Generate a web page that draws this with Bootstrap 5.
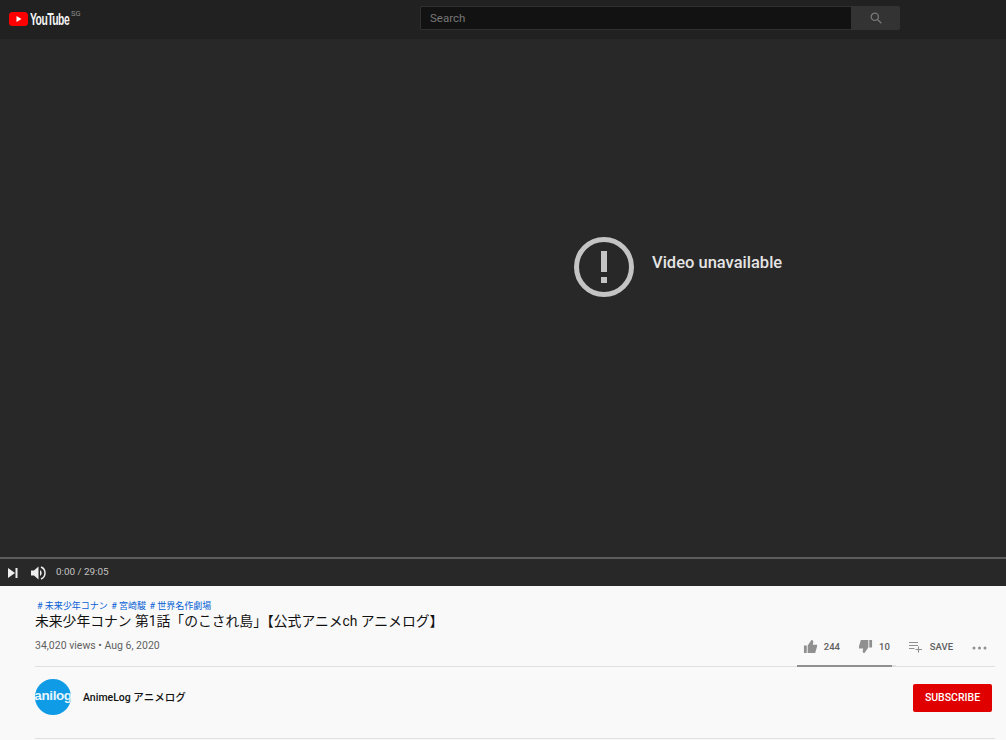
<!DOCTYPE html>
<html lang="en">
<head>
  <meta charset="UTF-8">
  <title>未来少年コナン 第1話 - YouTube</title>
  <link href="https://cdn.jsdelivr.net/npm/bootstrap@5.3.0/dist/css/bootstrap.min.css" rel="stylesheet">
  <style>
    body { font-family: Roboto, "Noto Sans CJK JP", sans-serif; background: #f9f9f9; width: 1006px; height: 740px; overflow: hidden; }
    .top-bar { height: 39px; background: #212121; padding-left: 9px; }
    .logo-box { width: 411px; margin-top: -2px; }
    .yt-word { display: inline-block; width: 39px; font-family: "Liberation Sans", sans-serif; font-weight: 700; font-size: 14px; letter-spacing: -.7px; color: #f4f4f4; margin-left: 2px; transform: scale(.74, 1.16); transform-origin: left center; line-height: 1; white-space: nowrap; }
    .yt-region { font-size: 7.5px; color: #8a8a8a; margin-left: 2px; margin-top: -9px; line-height: 1; }
    .search-wrap { margin-top: -3px; }
    .search-input { width: 431px; height: 24px; background: #121212; border: 1px solid #303030; border-right: 0; color: #777; font-size: 11.5px; padding: 1px 0 0 9px; border-radius: 2px 0 0 2px; }
    .search-btn { width: 49px; height: 24px; background: #333; border-radius: 0 2px 2px 0; }
    .video-area { height: 518px; background: #282828; padding: 198px 0 0 574px; }
    .video-msg { font-size: 16.5px; font-weight: 500; color: #e4e4e4; margin-left: 18px; margin-top: -8px; }
    .progress-line { height: 2px; background: #5c5c5c; }
    .player-bar { height: 27px; background: #282828; padding-left: 8px; }
    .vol-icon { margin-left: 13px; }
    .time-text { font-size: 9.9px; color: #c4c4c4; margin-left: 10px; }
    .info-area { padding: 13px 11px 0 35px; }
    .tag-row { font-size: 9px; line-height: 14px; color: #065fd4; padding-left: 2px; }
    .tag-row span { margin-right: 3.5px; }
    .video-title { font-size: 13.8px; font-weight: 400; line-height: 16px; color: #111; margin: 0; }
    .meta-row { height: 38px; border-bottom: 1px solid #e0e0e0; position: relative; }
    .view-text { font-size: 10.5px; color: #606060; margin-top: 9px; }
    .act-group { padding: 10px 0 0; margin-right: 8px; }
    .act-text { font-size: 9.5px; font-weight: 500; color: #606060; line-height: 16px; }
    .gap-like { margin: 0 18px 0 6px; }
    .gap-dislike { margin: 0 19px 0 6px; }
    .gap-save { margin: 0 19px 0 8px; }
    .like-bar { position: absolute; left: 762px; bottom: -1px; width: 99px; height: 2px; background: #e0e0e0; }
    .like-fill { width: 95px; height: 2px; background: #909090; }
    .channel-row { height: 72px; padding: 0 3px 10px 0; border-bottom: 1px solid #e0e0e0; }
    .channel-pic { width: 36px; height: 36px; margin-top: -2px; border-radius: 50%; background: #0f9be6; color: #e8f6fe; font-family: "Liberation Sans", sans-serif; font-weight: 700; font-size: 13.5px; letter-spacing: -.4px; overflow: hidden; }
    .channel-name { font-size: 10.5px; font-weight: 500; color: #111; margin-left: 12px; }
    .sub-btn { width: 79px; height: 28px; padding: 0; background: #e00000; color: #fff; border: 0; border-radius: 2px; font-size: 10.5px; font-weight: 500; }
    .sub-btn:hover { background: #e00000; color: #fff; }
  </style>
</head>
<body>

  <div class="top-bar d-flex align-items-center">
    <div class="logo-box d-flex align-items-center">
      <svg width="19" height="14" viewBox="0 0 19 14"><rect width="19" height="14" rx="3.500" fill="#f00"/><path d="M7.500 4v6l5-3z" fill="#fff"/></svg>
      <span class="yt-word">YouTube</span>
      <span class="yt-region">SG</span>
    </div>
    <div class="search-wrap d-flex">
      <div class="search-input d-flex align-items-center">Search</div>
      <div class="search-btn d-flex align-items-center justify-content-center">
        <svg width="12" height="12" viewBox="0 0 12 12" fill="none" stroke="#777" stroke-width="1.300"><circle cx="4.800" cy="4.800" r="3.600"/><path d="M7.500 7.500l3.800 3.800"/></svg>
      </div>
    </div>
  </div>

  <div class="video-area">
    <div class="d-flex align-items-center">
      <svg width="60" height="60" viewBox="0 0 60 60"><circle cx="30" cy="30" r="27.500" fill="none" stroke="#c4c4c4" stroke-width="5"/><rect x="27" y="14" width="6" height="21" fill="#c4c4c4"/><rect x="27" y="40" width="6" height="6" fill="#c4c4c4"/></svg>
      <div class="video-msg">Video unavailable</div>
    </div>
  </div>
  <div class="progress-line"></div>
  <div class="player-bar d-flex align-items-center">
    <svg width="10" height="10" viewBox="0 0 10 10" fill="#eee"><path d="M0 0l7 5-7 5z"/><rect x="7.500" y="0" width="2" height="10"/></svg>
    <svg class="vol-icon" width="15" height="14" viewBox="0 0 15 14"><path d="M0 4.500h3l4.500-4v13l-4.500-4H0z" fill="#eee"/><path d="M9 4a3.500 3.500 0 0 1 0 6z" fill="#eee"/><path d="M10 1a6.500 6.500 0 0 1 0 12" fill="none" stroke="#eee" stroke-width="1.500"/></svg>
    <span class="time-text">0:00 / 29:05</span>
  </div>

  <div class="info-area">
    <div class="tag-row"><span># 未来少年コナン</span><span># 宮崎駿</span><span># 世界名作劇場</span></div>
    <h1 class="video-title">未来少年コナン 第1話「のこされ島」【公式アニメch アニメログ】</h1>
    <div class="meta-row d-flex justify-content-between">
      <div class="view-text">34,020 views • Aug 6, 2020</div>
      <div class="act-group d-flex align-items-start">
        <svg width="15" height="15" viewBox="0 0 16 16" fill="#909090"><path d="M1 7h3v8H1zM5 7l4-6c1.500 0 2 1 2 2l-.5 3H15v2l-2 7H5z"/></svg>
        <span class="act-text gap-like">244</span>
        <svg width="15" height="15" viewBox="0 0 16 16" fill="#909090"><path d="M12 1h3v8h-3zM11 9l-4 6c-1.500 0-2-1-2-2l.5-3H1V8l2-7h8z"/></svg>
        <span class="act-text gap-dislike">10</span>
        <svg width="13" height="14" viewBox="0 0 13 14" fill="none" stroke="#909090" stroke-width="1.100"><path d="M0 3.500h9M0 6.500h9M0 9.500h5.500M9.500 7.500v6M6.500 10.500h6.500"/></svg>
        <span class="act-text gap-save">SAVE</span>
        <svg width="15" height="16" viewBox="0 0 15 16" fill="#909090"><circle cx="2" cy="9" r="1.500"/><circle cx="7.500" cy="9" r="1.500"/><circle cx="13" cy="9" r="1.500"/></svg>
      </div>
      <div class="like-bar"><div class="like-fill"></div></div>
    </div>
    <div class="channel-row d-flex align-items-center">
      <div class="channel-pic d-flex align-items-center justify-content-center">anilog</div>
      <div class="channel-name">AnimeLog アニメログ</div>
      <button type="button" class="btn sub-btn ms-auto">SUBSCRIBE</button>
    </div>
  </div>

</body>
</html>
